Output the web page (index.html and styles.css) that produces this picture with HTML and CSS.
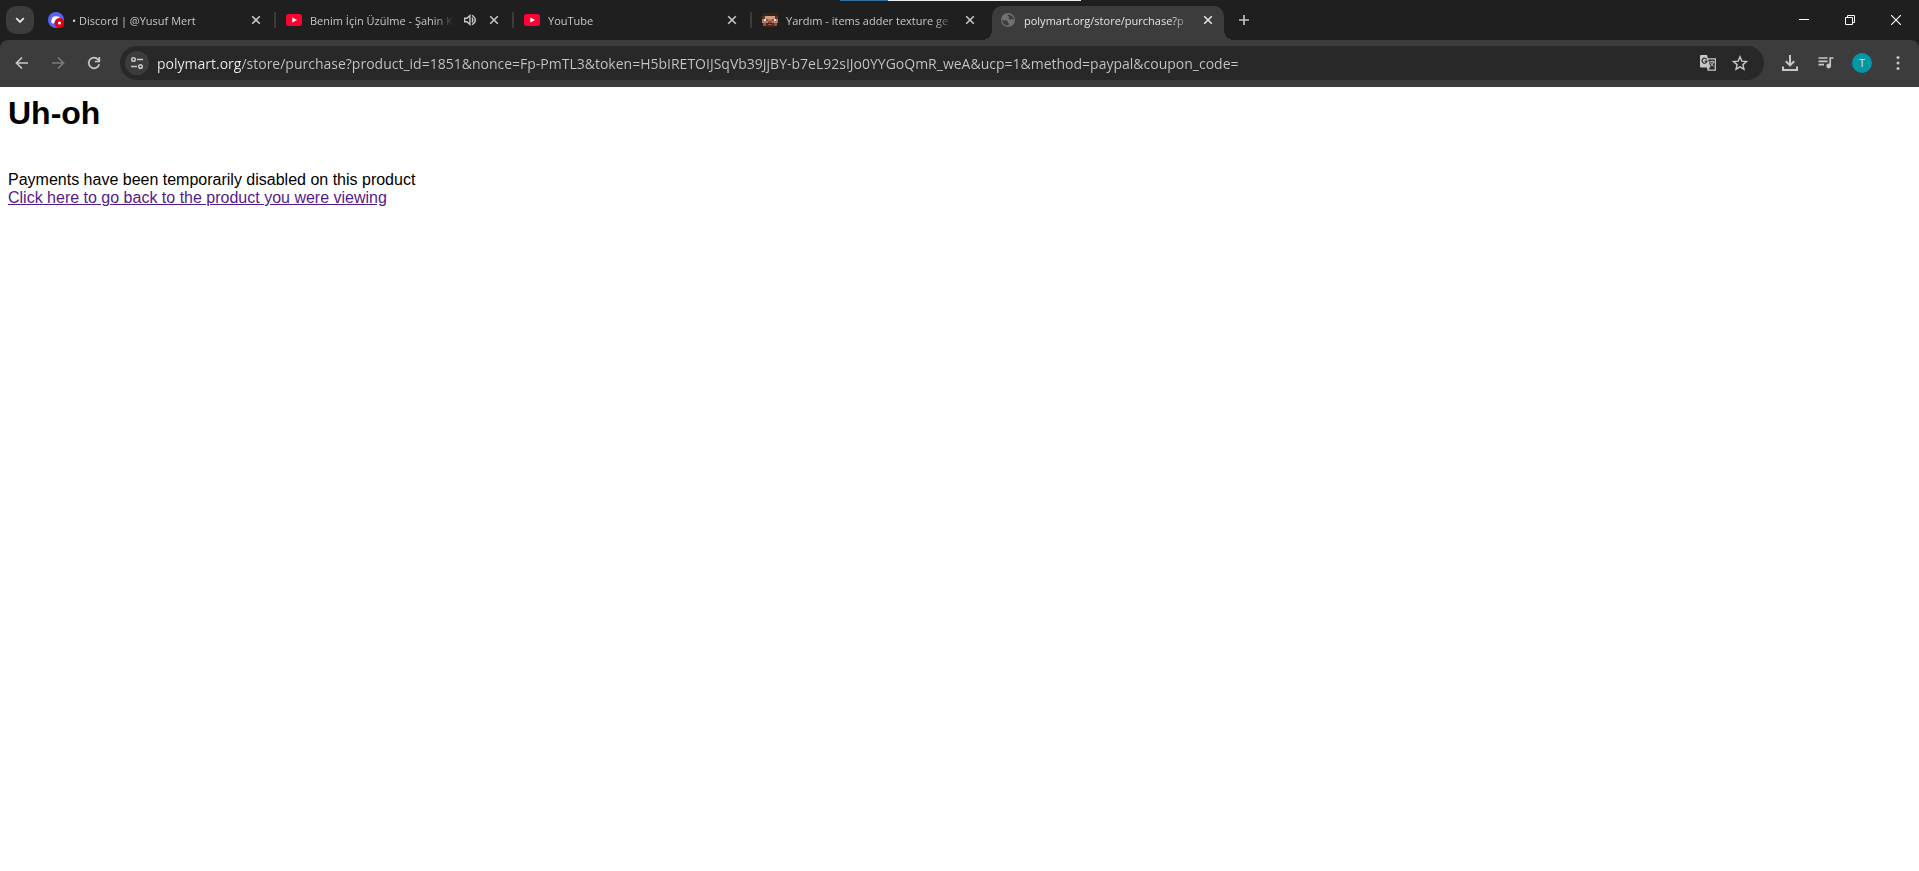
FILE: index.html
```html
<!DOCTYPE html>
<html lang="tr">
<head>
  <meta charset="UTF-8" />
  <meta name="viewport" content="width=device-width, initial-scale=1.0" />
  <title>polymart.org/store/purchase</title>
  <link rel="stylesheet" href="styles.css">
</head>
<body>
  <!-- Icons used more than once -->
  <svg class="defs" aria-hidden="true">
    <symbol id="close" viewBox="0 0 16 16"><path d="M4.2 4.2l7.6 7.6M11.8 4.2l-7.6 7.6" fill="none" stroke="currentColor" stroke-width="1.6" /></symbol>
    <symbol id="youtube" viewBox="0 0 16 16"><rect y="2" width="16" height="12" rx="2.5" fill="#ff0033" /><path d="M6.3 5.4v5.2L11 8z" fill="#fff" /></symbol>
  </svg>

  <header class="browser">
    <div class="progress"><span class="progress-done"></span></div>

    <div class="tab-strip">
      <button class="tab-search" aria-label="Search tabs">
        <svg width="16" height="16" viewBox="0 0 16 16"><path d="M4.2 6.2L8 10l3.8-3.8" fill="none" stroke="currentColor" stroke-width="1.8" /></svg>
      </button>

      <nav class="tabs">
        <div class="tab">
          <svg class="favicon" viewBox="0 0 16 16">
            <circle cx="8" cy="8" r="8" fill="#5865f2" />
            <path d="M4.8 4.8Q8 3.7 11.2 4.8Q12.8 7.5 12.7 10.4Q11.3 11.6 10.3 11.6L9.6 10.6H6.4L5.7 11.6Q4.7 11.6 3.3 10.4Q3.2 7.5 4.8 4.8z" fill="#fff" />
            <circle cx="11.5" cy="11" r="4.9" fill="#e00514" />
            <circle cx="11.5" cy="11" r="1.5" fill="#fff" />
          </svg>
          <a class="tab-title" href="#">• Discord | @Yusuf Mert</a>
          <button class="tab-close" aria-label="Close tab"><svg width="16" height="16"><use href="#close" /></svg></button>
        </div>
        <div class="tab">
          <svg class="favicon"><use href="#youtube" /></svg>
          <a class="tab-title" href="#">Benim İçin Üzülme - Şahin K</a>
          <button class="tab-close" aria-label="Mute tab">
            <svg width="16" height="16" viewBox="0 0 16 16" fill="none" stroke="currentColor" stroke-width="1.4"><path d="M2.7 6.2h2.2l3-2.6v8.8l-3-2.6H2.7z" /><path d="M10 5.8q1.7 2.2 0 4.4M10 3.2q6.8 4.8 0 9.6" /></svg>
          </button>
          <button class="tab-close" aria-label="Close tab"><svg width="16" height="16"><use href="#close" /></svg></button>
        </div>
        <div class="tab">
          <svg class="favicon"><use href="#youtube" /></svg>
          <a class="tab-title" href="#">YouTube</a>
          <button class="tab-close" aria-label="Close tab"><svg width="16" height="16"><use href="#close" /></svg></button>
        </div>
        <div class="tab">
          <svg class="favicon" viewBox="0 0 16 16" shape-rendering="crispEdges">
            <path d="M1 1h14v3H1z" fill="#3c2414" />
            <path d="M0 4h16v7H0z" fill="#b97b5b" />
            <path d="M0 4h3v3H0zM13 4h3v3h-3z" fill="#5a3520" />
            <path d="M3 4h10v3H3z" fill="#d39a78" />
            <path d="M2 7h2v2H2zM12 7h2v2h-2z" fill="#e8e0f0" />
            <path d="M4 7h2v2H4zM10 7h2v2h-2z" fill="#6a4f9a" />
            <path d="M6 9h4v2H6z" fill="#8c4a32" />
            <path d="M1 11h14v3H1z" fill="#8a5638" />
            <path d="M4 11h8v4H4z" fill="#4a2a18" />
            <path d="M6 12h4v1H6z" fill="#a05a46" />
          </svg>
          <a class="tab-title" href="#">Yardım - items adder texture ge</a>
          <button class="tab-close" aria-label="Close tab"><svg width="16" height="16"><use href="#close" /></svg></button>
        </div>
        <div class="tab active">
          <svg class="favicon" viewBox="0 0 16 16">
            <circle cx="8" cy="8" r="7" fill="#6e7072" />
            <path d="M2.2 8.3L6 8.6q2 .3 1.8 1.4t1 1.4l-.2 2.2Q3 13.5 2.2 8.3zM8 2.4q-.8 1.6.6 2t.3 1.7 1.5 1.3 1.6-.4l1.8.9Q13.7 3.5 8 2.4z" fill="#3c3c3c" />
          </svg>
          <a class="tab-title" href="#">polymart.org/store/purchase?p</a>
          <button class="tab-close" aria-label="Close tab"><svg width="16" height="16"><use href="#close" /></svg></button>
        </div>
      </nav>

      <button class="new-tab" aria-label="New tab">
        <svg width="16" height="16" viewBox="0 0 16 16"><path d="M8 3v10M3 8h10" stroke="currentColor" stroke-width="1.6" /></svg>
      </button>

      <div class="window-controls">
        <button aria-label="Minimize"><svg width="10" height="10"><path d="M0 4.5h10" stroke="currentColor" /></svg></button>
        <button aria-label="Restore"><svg width="10" height="10" fill="none" stroke="currentColor"><path d="M.5 2.5h7v7h-7zM2.5 2.5v-2h7v7h-2" /></svg></button>
        <button aria-label="Close"><svg width="10" height="10"><path d="M0 0l10 10M10 0L0 10" stroke="currentColor" stroke-width="1.1" /></svg></button>
      </div>
    </div>

    <div class="toolbar">
      <button class="tool" aria-label="Back">
        <svg width="16" height="16" viewBox="0 0 16 16" fill="none" stroke="currentColor" stroke-width="1.7"><path d="M14 8H3M8 2.5L2.5 8 8 13.5" /></svg>
      </button>
      <button class="tool" aria-label="Forward" disabled>
        <svg width="16" height="16" viewBox="0 0 16 16" fill="none" stroke="currentColor" stroke-width="1.7"><path d="M2 8h11M8 2.5L13.5 8 8 13.5" /></svg>
      </button>
      <button class="tool" aria-label="Reload">
        <svg width="16" height="16" viewBox="0 0 16 16" fill="none" stroke="currentColor" stroke-width="1.7"><path d="M13.2 9.2A5.3 5.3 0 1 1 12 4.5L13 5.6M13.3 2v4.5H8.8" /></svg>
      </button>

      <form class="omnibox">
        <button type="button" class="site-info" aria-label="View site information">
          <svg width="16" height="16" viewBox="0 0 16 16" fill="none" stroke="currentColor" stroke-width="1.5"><circle cx="4.5" cy="4.5" r="1.8" /><path d="M8 4.5h6M2 11.5h6" /><circle cx="11.5" cy="11.5" r="1.8" /></svg>
        </button>
        <input class="url" type="text" aria-label="Address and search bar" spellcheck="false" value="polymart.org/store/purchase?product_id=1851&amp;nonce=Fp-PmTL3&amp;token=H5bIRETOIJSqVb39JjBY-b7eL92sIJo0YYGoQmR_weA&amp;ucp=1&amp;method=paypal&amp;coupon_code=" />
        <button type="button" class="omni-action" aria-label="Translate this page">
          <svg width="18" height="18" viewBox="0 0 18 18">
            <path d="M8 4.8h8.3v11.4H9.2z" fill="none" stroke="currentColor" stroke-width="1.3" />
            <path d="M2 1h6l3.5 12.5H2q-1 0-1-1V2q0-1 1-1z" fill="currentColor" />
            <path d="M7.6 5.3A2.5 2.5 0 1 0 8 7.2H5.6" fill="none" stroke="#282828" stroke-width="1.2" />
            <path d="M10.5 7.8h5M13 6.5v1.3M14.6 7.8q-.6 2.4-3 4.2M11.4 8.6q1 2.2 3.3 3.7" fill="none" stroke="currentColor" />
            <path d="M8 13.5h3l-2 2.7z" fill="currentColor" />
          </svg>
        </button>
        <button type="button" class="omni-action" aria-label="Bookmark this tab">
          <svg width="16" height="16" viewBox="0 0 16 16"><path d="M8 1.8l1.8 4.3 4.7.4-3.6 3.1 1.1 4.6L8 11.8l-4 2.4 1.1-4.6-3.6-3.1 4.7-.4z" fill="none" stroke="currentColor" stroke-width="1.4" /></svg>
        </button>
      </form>

      <div class="toolbar-actions">
        <button class="tool" aria-label="Downloads">
          <svg width="18" height="18" viewBox="0 0 18 18" fill="none" stroke="currentColor" stroke-width="2"><path d="M9 1v10M4.8 7.2L9 11.4l4.2-4.2M2 12.5V16h14v-3.5" /></svg>
        </button>
        <button class="tool" aria-label="Media controls">
          <svg width="18" height="18" viewBox="0 0 18 18"><path d="M1.5 4h9M1.5 7.3h9M1.5 10.6H7M13.2 12V4h3.3" fill="none" stroke="currentColor" stroke-width="1.7" /><circle cx="11.7" cy="12" r="2.4" fill="currentColor" /></svg>
        </button>
        <button class="tool" aria-label="Profile"><span class="avatar">T</span></button>
        <button class="tool" aria-label="Menu">
          <svg width="16" height="16" viewBox="0 0 16 16" fill="currentColor"><circle cx="8" cy="2.5" r="1.5" /><circle cx="8" cy="8" r="1.5" /><circle cx="8" cy="13.5" r="1.5" /></svg>
        </button>
      </div>
    </div>
  </header>

  <main>
    <h1>Uh-oh</h1>
    <br>
    Payments have been temporarily disabled on this product
    <br>
    <a href="#">Click here to go back to the product you were viewing</a>
  </main>
</body>
</html>
```

FILE: styles.css
```css
/* Reset and base styles */
* {
  box-sizing: border-box;
}
body {
  margin: 0;
  background: #fff;
  color: #000;
  font-family: "Liberation Sans", Arial, sans-serif;
  font-size: 16px;
}
button {
  display: flex;
  align-items: center;
  justify-content: center;
  padding: 0;
  border: none;
  background: none;
  color: inherit;
  font: inherit;
}
svg {
  display: block;
}
.defs {
  display: none;
}

/* Browser window */
.browser {
  position: relative;
  background: #1f1f1f;
  color: #c7c7c7;
  font-family: "Open Sans", "Noto Sans", sans-serif;
}
.progress {
  position: absolute;
  top: 0;
  left: 43.75%;
  width: 12.6%;
  height: 1px;
  background: #e8f0ee;
}
.progress-done {
  display: block;
  width: 20%;
  height: 1px;
  background: #2f6f9f;
}

/* Tab strip */
.tab-strip {
  display: flex;
  align-items: center;
  height: 40px;
  padding-left: 6px;
}
.tab-search {
  width: 28px;
  height: 28px;
  margin-right: 6px;
  border-radius: 10px;
  background: #3c3c3c;
  color: #e3e3e3;
}
.tabs {
  display: flex;
  flex: 0 1 1184px;
  gap: 6px;
  min-width: 0;
  height: 40px;
  padding-top: 6px;
}
.tab {
  position: relative;
  display: flex;
  flex: 1 1 0;
  align-items: center;
  gap: 8px;
  min-width: 0;
  padding: 0 8px 6px;
}
.tab::after {
  content: "";
  position: absolute;
  top: 6px;
  right: -4px;
  width: 2px;
  height: 16px;
  background: #3c3c3c;
}
.tab.active {
  border-radius: 10px 10px 0 0;
  background: #3c3c3c;
  color: #e3e3e3;
}

/* Curved feet of the active tab */
.tab.active::before,
.tab.active::after {
  content: "";
  position: absolute;
  top: auto;
  bottom: 0;
  width: 10px;
  height: 10px;
}
.tab.active::before {
  left: -10px;
  background: radial-gradient(circle at 0 0, #1f1f1f 10px, #3c3c3c 10px);
}
.tab.active::after {
  right: -10px;
  background: radial-gradient(circle at 100% 0, #1f1f1f 10px, #3c3c3c 10px);
}
.tab:nth-last-child(2)::after {
  display: none;
}
.favicon {
  flex: none;
  width: 16px;
  height: 16px;
}
.tab-title {
  flex: 1;
  min-width: 0;
  padding-top: 2px;
  overflow: hidden;
  color: inherit;
  font-size: 11px;
  line-height: 16px;
  text-decoration: none;
  white-space: nowrap;
  mask-image: linear-gradient(to left, transparent, #000 20px);
}
.tab-close {
  flex: none;
  width: 16px;
  height: 16px;
}
.new-tab {
  width: 28px;
  height: 28px;
  margin-left: 6px;
}
.window-controls {
  display: flex;
  margin-left: auto;
  color: #fff;
}
.window-controls button {
  width: 46px;
  height: 40px;
}

/* Toolbar */
.toolbar {
  display: flex;
  align-items: center;
  gap: 2px;
  height: 47px;
  padding: 0 4px 1px 5px;
  border-radius: 8px 8px 0 0;
  background: #3c3c3c;
}
.tool {
  flex: none;
  width: 34px;
  height: 34px;
}
.tool:disabled {
  color: #7a7a7a;
}
.omnibox {
  display: flex;
  flex: 1;
  align-items: center;
  min-width: 0;
  height: 34px;
  margin: 0 7px;
  padding: 0 8px 0 5px;
  border-radius: 17px;
  background: #282828;
}
.site-info {
  flex: none;
  width: 24px;
  height: 24px;
  margin-right: 8px;
  border-radius: 50%;
  background: #3c3c3c;
}
/* The host part of the address is brighter than the path */
.url {
  flex: 1;
  min-width: 0;
  height: 24px;
  padding: 0;
  border: none;
  outline: none;
  background: linear-gradient(to right, #f0f0f0 84px, #c7c7c7 84px);
  background-clip: text;
  -webkit-background-clip: text;
  color: transparent;
  font-family: inherit;
  font-size: 14px;
}
.omni-action {
  flex: none;
  width: 32px;
  height: 32px;
}
.toolbar-actions {
  display: flex;
  gap: 2px;
}
.avatar {
  width: 20px;
  height: 20px;
  border-radius: 50%;
  background: #0097a7;
  color: #e3e3e3;
  font-size: 11px;
  line-height: 20px;
}

/* Page content */
main {
  padding: 8px;
  line-height: 18px;
}
h1 {
  margin: 0 0 21px;
  font-size: 32px;
  line-height: 37px;
}
a {
  color: #551a8b;
}
```
